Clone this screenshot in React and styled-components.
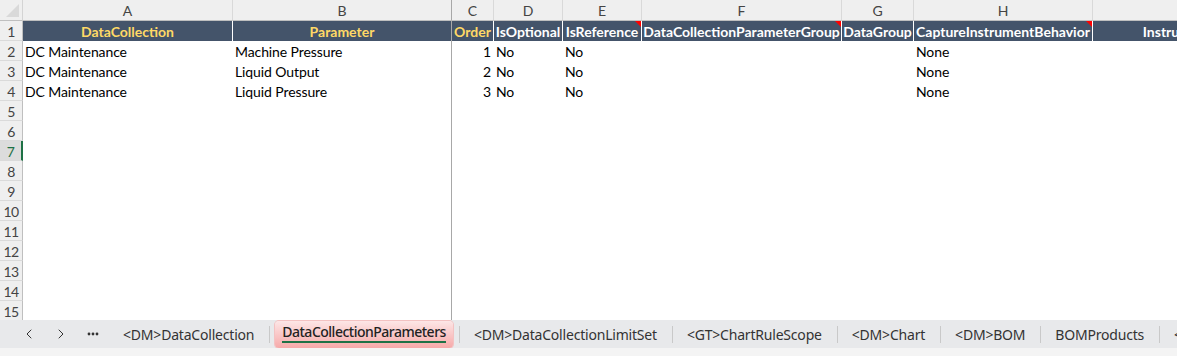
import React from 'react';
import styled, { createGlobalStyle } from 'styled-components';
import { ChevronLeft, ChevronRight } from 'lucide-react';

const GlobalStyle = createGlobalStyle`
  html, body {
    margin: 0;
    padding: 0;
    background: #ffffff;
    overflow: hidden;
  }
  body {
    font-family: Lato, "Liberation Sans", sans-serif;
  }
`;

const COLS = '23px 210px 219px 42px 69px 79px 200px 72px 179px 234px';

const Window = styled.div`
  width: 1177px;
  height: 356px;
  display: flex;
  flex-direction: column;
  overflow: hidden;
  background: #ffffff;
`;

const Sheet = styled.div`
  flex: 1;
  min-height: 0;
  overflow: hidden;
`;

const Row = styled.div`
  display: grid;
  grid-template-columns: ${COLS};
  height: ${p => (p.$head ? '21px' : '20px')};
`;

const Corner = styled.div`
  position: relative;
  background: #efefef;
  border-right: 1px solid #d4d4d4;
  border-bottom: 1px solid #bfbfbf;
  box-sizing: border-box;

  &::after {
    content: '';
    position: absolute;
    right: 3px;
    bottom: 3px;
    border-style: solid;
    border-width: 0 0 13px 13px;
    border-color: transparent transparent #d9d9d9 transparent;
  }
`;

const ColLetter = styled.div`
  background: #efefef;
  border-right: 1px solid ${p => (p.$frozen ? '#a8a8a8' : '#d9d9d9')};
  border-bottom: 1px solid #bfbfbf;
  box-sizing: border-box;
  display: flex;
  align-items: center;
  justify-content: center;
  font-size: 14px;
  color: #444;
  padding-top: 1px;
`;

const RowNum = styled.div`
  background: ${p => (p.$active ? '#dcdcdc' : '#efefef')};
  border-right: ${p => (p.$active ? '2px solid #1e7145' : '1px solid #bfbfbf')};
  border-bottom: 1px solid #dadada;
  box-sizing: border-box;
  display: flex;
  align-items: center;
  justify-content: center;
  font-size: 14px;
  color: ${p => (p.$active ? '#1e7145' : '#444')};
  letter-spacing: -0.5px;
  padding-top: 1px;
`;

const HeadCell = styled.div`
  position: relative;
  background: #44546a;
  color: ${p => (p.$gold ? '#ffd966' : '#ffffff')};
  font-weight: 700;
  font-size: 14px;
  white-space: nowrap;
  overflow: hidden;
  display: flex;
  align-items: center;
  justify-content: center;
  border-right: 1px solid ${p => (p.$frozen ? '#a8a8a8' : '#ffffff')};
  box-sizing: border-box;
  padding: 1px 1px 0;
`;

const Note = styled.span`
  position: absolute;
  top: 0;
  right: 0;
  border-style: solid;
  border-width: 0 6px 6px 0;
  border-color: transparent #ff0000 transparent transparent;
`;

const Cell = styled.div`
  font-size: 14px;
  color: #000;
  white-space: nowrap;
  overflow: hidden;
  display: flex;
  align-items: center;
  justify-content: ${p => (p.$num ? 'flex-end' : 'flex-start')};
  padding: 1px 3px 0 2px;
  box-sizing: border-box;
  letter-spacing: -0.1px;
  border-right: ${p => (p.$frozen ? '1px solid #a8a8a8' : 'none')};
`;

const TabBar = styled.div`
  height: 28px;
  flex-shrink: 0;
  background: #e8e9eb;
  display: flex;
  align-items: center;
  font-family: "Noto Sans", "Open Sans", sans-serif;
  font-size: 14px;
  color: #333;
  white-space: nowrap;
  overflow: hidden;
`;

const Footer = styled.div`
  height: 8px;
  flex-shrink: 0;
  background: #f4f4f4;
`;

const NavButton = styled.div`
  width: 32px;
  display: flex;
  justify-content: center;
  align-items: center;
  color: #333;
  flex-shrink: 0;
`;

const Tab = styled.div`
  flex-shrink: 0;
  padding: 0 15px 0 14px;
  height: 27px;
  display: flex;
  align-items: center;
  letter-spacing: -0.2px;
`;

const ActiveTab = styled.div`
  flex-shrink: 0;
  margin: 0 6px 0 5px;
  height: 27px;
  padding: 0 7px;
  display: flex;
  align-items: center;
  border-radius: 4px;
  background: linear-gradient(#fde6e6, #f6a9a9);
  box-shadow: 0 0 0 1px #f3c2c2;
  color: #222;
  font-weight: 500;
  letter-spacing: -0.5px;

  span {
    border-bottom: 2px solid #1e7145;
    line-height: 18px;
    margin-top: -2px;
  }
`;

const Sep = styled.div`
  width: 1px;
  height: 17px;
  background: #c9c9c9;
  flex-shrink: 0;
`;

const Dots = () => (
  <svg width="12" height="4" viewBox="0 0 12 4">
    <circle cx="2" cy="2" r="1.4" fill="#333" />
    <circle cx="6" cy="2" r="1.4" fill="#333" />
    <circle cx="10" cy="2" r="1.4" fill="#333" />
  </svg>
);

const letters = ['A', 'B', 'C', 'D', 'E', 'F', 'G', 'H', 'I'];

const headers = [
  { text: 'DataCollection', gold: true },
  { text: 'Parameter', gold: true, frozen: true },
  { text: 'Order', gold: true },
  { text: 'IsOptional' },
  { text: 'IsReference', note: true },
  { text: 'DataCollectionParameterGroup', note: true },
  { text: 'DataGroup' },
  { text: 'CaptureInstrumentBehavior', note: true },
  { text: 'InstrumentParameter' },
];

const data = [
  ['DC Maintenance', 'Machine Pressure', '1', 'No', 'No', '', '', 'None', ''],
  ['DC Maintenance', 'Liquid Output', '2', 'No', 'No', '', '', 'None', ''],
  ['DC Maintenance', 'Liquid Pressure', '3', 'No', 'No', '', '', 'None', ''],
];

const tabs = [
  '<DM>DataCollectionLimitSet',
  '<GT>ChartRuleScope',
  '<DM>Chart',
  '<DM>BOM',
  'BOMProducts',
  '<DM>BOMProductParameters',
];

const App = () => {
  const rows = [];
  for (let r = 2; r <= 15; r++) rows.push(r);

  return (
    <Window>
      <GlobalStyle />
      <Sheet>
        <Row $head>
          <Corner />
          {letters.map((l, i) => (
            <ColLetter key={l} $frozen={i === 1}>{l}</ColLetter>
          ))}
        </Row>
        <Row>
          <RowNum>1</RowNum>
          {headers.map(h => (
            <HeadCell key={h.text} $gold={h.gold} $frozen={h.frozen}>
              {h.text}
              {h.note && <Note />}
            </HeadCell>
          ))}
        </Row>
        {rows.map(r => {
          const vals = data[r - 2] || ['', '', '', '', '', '', '', '', ''];
          return (
            <Row key={r}>
              <RowNum $active={r === 7}>{r}</RowNum>
              {vals.map((v, i) => (
                <Cell key={i} $num={i === 2} $frozen={i === 1}>{v}</Cell>
              ))}
            </Row>
          );
        })}
      </Sheet>
      <TabBar>
        <NavButton style={{ marginLeft: 13 }}><ChevronLeft size={16} strokeWidth={1.5} /></NavButton>
        <NavButton><ChevronRight size={16} strokeWidth={1.5} /></NavButton>
        <NavButton><Dots /></NavButton>
        <Tab>{'<DM>DataCollection'}</Tab>
        <Sep />
        <ActiveTab><span>DataCollectionParameters</span></ActiveTab>
        {tabs.map(t => (
          <React.Fragment key={t}>
            <Sep />
            <Tab>{t}</Tab>
          </React.Fragment>
        ))}
      </TabBar>
      <Footer />
    </Window>
  );
};

export default App;
